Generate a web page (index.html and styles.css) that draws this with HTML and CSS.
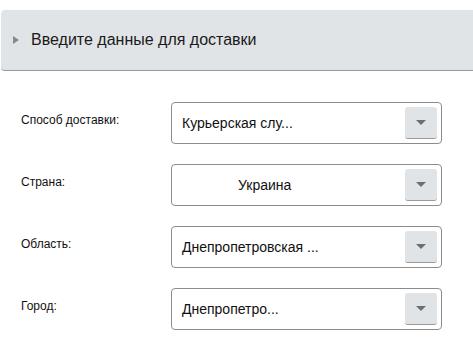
FILE: index.html
```html
<!DOCTYPE html>
<html lang="ru">
<head>
  <meta charset="UTF-8">
  <title>Доставка</title>
  <link rel="stylesheet" href="styles.css">
</head>
<body>

  <!-- ЗАГОЛОВОК -->
  <div class="panel-head">
    <span class="panel-head__arrow"></span>
    <span class="panel-head__title">Введите данные для доставки</span>
  </div>

  <!-- ФОРМА -->
  <div class="form">
    <div class="form__row">
      <label class="form__label">Способ доставки:</label>
      <div class="select">
        <span class="select__value">Курьерская слу...</span>
        <span class="select__btn"><span class="select__caret"></span></span>
      </div>
    </div>
    <div class="form__row">
      <label class="form__label">Страна:</label>
      <div class="select">
        <span class="select__value select__value--center">Украина</span>
        <span class="select__btn"><span class="select__caret"></span></span>
      </div>
    </div>
    <div class="form__row">
      <label class="form__label">Область:</label>
      <div class="select">
        <span class="select__value">Днепропетровская ...</span>
        <span class="select__btn"><span class="select__caret"></span></span>
      </div>
    </div>
    <div class="form__row">
      <label class="form__label">Город:</label>
      <div class="select">
        <span class="select__value">Днепропетро...</span>
        <span class="select__btn"><span class="select__caret"></span></span>
      </div>
    </div>
  </div>

</body>
</html>
```
FILE: styles.css
```css
html, body {
  margin: 0;
  padding: 0;
  background: #fff;
  font-family: "Liberation Sans", Arial, sans-serif;
  color: #111;
}

/* === ЗАГОЛОВОК === */
.panel-head {
  margin: 10px 0 0 1px;
  height: 60px;
  display: flex;
  align-items: center;
  background: #e1e4e7;
  border-bottom: 1px solid #9a9a9a;
  border-radius: 4px 0 0 4px;
}

.panel-head__arrow {
  width: 0;
  height: 0;
  margin: 0 12px 0 12px;
  border-left: 6px solid #8a8a8a;
  border-top: 4px solid transparent;
  border-bottom: 4px solid transparent;
}

.panel-head__title {
  font-size: 16px;
  color: #1a1a1a;
}

/* === ФОРМА === */
.form {
  padding-top: 31px;
  display: flex;
  flex-direction: column;
  gap: 20px;
}

.form__row {
  display: flex;
  align-items: flex-start;
}

.form__label {
  width: 150px;
  padding: 11px 0 0 21px;
  font-size: 12px;
  color: #111;
}

.select {
  width: 269px;
  height: 40px;
  display: flex;
  align-items: center;
  border: 1px solid #8c8c8c;
  border-radius: 4px;
}

.select__value {
  flex: 1;
  padding-left: 10px;
  font-size: 14px;
  color: #111;
}

.select__value--center {
  padding-left: 66px;
}

.select__btn {
  width: 32px;
  height: 31px;
  margin-right: 4px;
  display: flex;
  align-items: center;
  justify-content: center;
  background: #e1e4e7;
  border-bottom: 1px solid #9a9a9a;
  border-radius: 3px;
}

.select__caret {
  width: 0;
  height: 0;
  border-top: 5px solid #6e6e6e;
  border-left: 5px solid transparent;
  border-right: 5px solid transparent;
}
```
